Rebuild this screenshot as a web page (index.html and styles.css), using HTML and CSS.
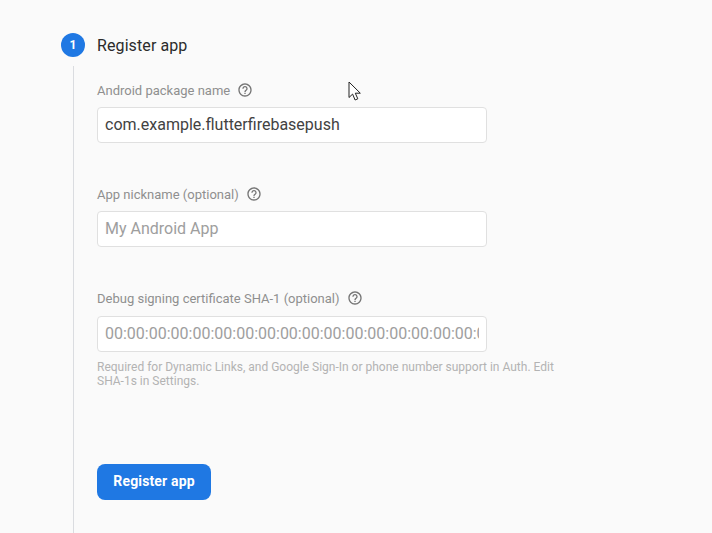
FILE: index.html
```html
<!DOCTYPE html>
<html lang="en">
<head>
    <meta charset="UTF-8">
    <title>Add Firebase to your Android app</title>
    <link rel="stylesheet" href="styles.css">
</head>
<body>
    <div class="step-header">
        <div class="step-number">1</div>
        <h2 class="step-title">Register app</h2>
    </div>
    <div class="step-body">
        <div class="field">
            <label class="field-label">Android package name
                <svg class="help-icon" viewBox="0 0 24 24"><path d="M11 18h2v-2h-2v2zm1-16C6.48 2 2 6.48 2 12s4.48 10 10 10 10-4.48 10-10S17.52 2 12 2zm0 18c-4.41 0-8-3.59-8-8s3.59-8 8-8 8 3.59 8 8-3.59 8-8 8zm0-14c-2.21 0-4 1.79-4 4h2c0-1.1.9-2 2-2s2 .9 2 2c0 2-3 1.75-3 5h2c0-2.25 3-2.5 3-5 0-2.21-1.79-4-4-4z"/></svg>
            </label>
            <input class="text-input" type="text" value="com.example.flutterfirebasepush">
        </div>
        <div class="field">
            <label class="field-label">App nickname (optional)
                <svg class="help-icon" viewBox="0 0 24 24"><path d="M11 18h2v-2h-2v2zm1-16C6.48 2 2 6.48 2 12s4.48 10 10 10 10-4.48 10-10S17.52 2 12 2zm0 18c-4.41 0-8-3.59-8-8s3.59-8 8-8 8 3.59 8 8-3.59 8-8 8zm0-14c-2.21 0-4 1.79-4 4h2c0-1.1.9-2 2-2s2 .9 2 2c0 2-3 1.75-3 5h2c0-2.25 3-2.5 3-5 0-2.21-1.79-4-4-4z"/></svg>
            </label>
            <input class="text-input" type="text" placeholder="My Android App">
        </div>
        <div class="field">
            <label class="field-label">Debug signing certificate SHA-1 (optional)
                <svg class="help-icon" viewBox="0 0 24 24"><path d="M11 18h2v-2h-2v2zm1-16C6.48 2 2 6.48 2 12s4.48 10 10 10 10-4.48 10-10S17.52 2 12 2zm0 18c-4.41 0-8-3.59-8-8s3.59-8 8-8 8 3.59 8 8-3.59 8-8 8zm0-14c-2.21 0-4 1.79-4 4h2c0-1.1.9-2 2-2s2 .9 2 2c0 2-3 1.75-3 5h2c0-2.25 3-2.5 3-5 0-2.21-1.79-4-4-4z"/></svg>
            </label>
            <input class="text-input" type="text" placeholder="00:00:00:00:00:00:00:00:00:00:00:00:00:00:00:00:00:00:00:00">
            <p class="field-hint">Required for Dynamic Links, and Google Sign-In or phone number support in Auth. Edit SHA-1s in Settings.</p>
        </div>
        <button class="primary-button">Register app</button>
    </div>

    <!-- mouse pointer caught in the capture -->
    <svg class="pointer" viewBox="0 0 14 21"><path d="M1 1v15.5l3.6-3.4 2.5 5.9 2.7-1.2-2.5-5.6h5z"/></svg>
</body>
</html>
```

FILE: styles.css
```css
html, body {
    height: 100%;
}

body {
    margin: 0;
    padding: 33px 0 0 61px;
    box-sizing: border-box;
    overflow: hidden;
    position: relative;
    background-color: #fafafa;
    font-family: Roboto, "Liberation Sans", sans-serif;
}

.step-header {
    display: flex;
    align-items: center;
    gap: 12px;
    height: 24px;
}

.step-number {
    width: 24px;
    height: 24px;
    border-radius: 50%;
    background-color: #1f78e3;
    color: white;
    font-size: 12px;
    font-weight: 700;
    line-height: 24px;
    text-align: center;
}

.step-title {
    margin: 0;
    font-size: 16px;
    font-weight: 400;
    letter-spacing: 0.1px;
    color: #2b2b2b;
}

.step-body {
    margin: 9px 0 0 12px;
    padding: 16px 0 33px 23px;
    border-left: 1px solid #dadce0;
    width: 460px;
}

.field {
    margin-bottom: 43px;
}

.field:nth-child(3) {
    margin-bottom: 0;
}

.field:nth-child(3) .field-label {
    margin-bottom: 10px;
}

.field-label {
    display: flex;
    align-items: center;
    gap: 7px;
    height: 16px;
    margin-bottom: 9px;
    font-size: 13px;
    color: #8f8f8f;
}

.help-icon {
    width: 16px;
    height: 16px;
    fill: #757575;
}

.text-input {
    display: block;
    box-sizing: border-box;
    width: 390px;
    height: 36px;
    padding: 0 7px 2px;
    border: 1px solid #e0e0e0;
    border-radius: 4px;
    background-color: white;
    font-family: inherit;
    font-size: 16px;
    color: #424242;
    outline: none;
}

.text-input::placeholder {
    color: #9e9e9e;
    opacity: 1;
}

.field-hint {
    margin: 8px 0 0;
    width: 460px;
    font-size: 12px;
    line-height: 14px;
    color: #b3b3b3;
}

.primary-button {
    display: block;
    width: 114px;
    height: 36px;
    margin-top: 76px;
    padding: 0 0 2px;
    border: none;
    border-radius: 8px;
    background-color: #1f78e3;
    color: white;
    font-family: inherit;
    font-size: 14px;
    font-weight: 700;
    letter-spacing: 0.15px;
}

.pointer {
    position: absolute;
    left: 348px;
    top: 81px;
    width: 14px;
    height: 21px;
    fill: white;
    stroke: #222;
    stroke-width: 1;
}
```
